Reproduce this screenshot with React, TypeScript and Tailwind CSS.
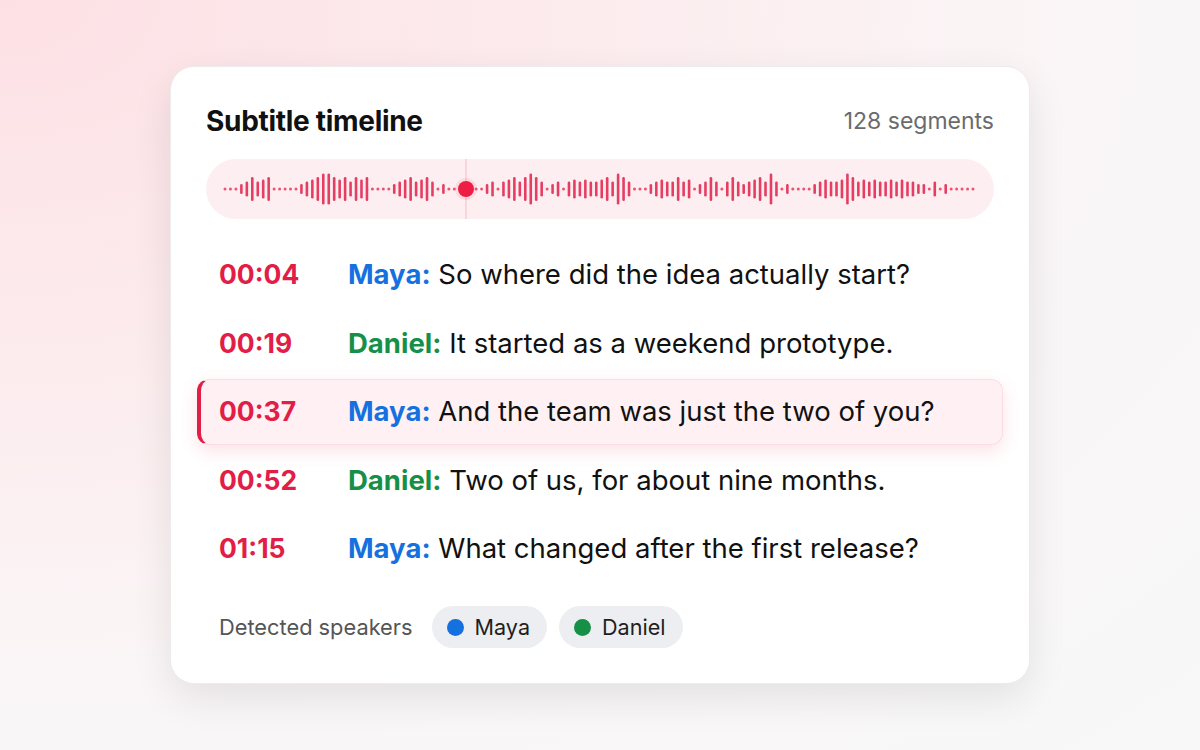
import React from "react";

const WAVE =
  "...smlmMl.....smMlxxl" +
  "MlmlMl....smMlmMlm.s.." +
  "  " +
  "...sm.mMlmlxlm.sm.mMmMm" +
  "mMlmxlm...smMmmlmM.smlm.m" +
  "lmsmMlmxm.s....smMmmMxl" +
  "mMmMmmMmMmmss.m.s.....";

const HEIGHTS: Record<string, number> = {
  ".": 3,
  s: 10,
  m: 15,
  M: 19,
  l: 24,
  x: 31,
};

const rows = [
  { time: "00:04", speaker: "Maya", text: "So where did the idea actually start?" },
  { time: "00:19", speaker: "Daniel", text: "It started as a weekend prototype." },
  { time: "00:37", speaker: "Maya", text: "And the team was just the two of you?", active: true },
  { time: "00:52", speaker: "Daniel", text: "Two of us, for about nine months." },
  { time: "01:15", speaker: "Maya", text: "What changed after the first release?" },
];

const Waveform = () => {
  const chars = WAVE.split("");
  const step = (767 - 19) / (chars.length - 1);

  return (
    <div className="relative h-[60px] rounded-full bg-[#fdeff1]">
      <svg width="790" height="60" viewBox="0 0 790 60" className="absolute inset-0">
        <rect x="259" y="0" width="2" height="60" fill="#f8d6dc" />
        {chars.map((c, i) => {
          if (c === " ") return null;
          const h = HEIGHTS[c];
          const x = 19 + i * step;
          if (c === ".") {
            return <circle key={i} cx={x} cy={30} r={1.5} fill="#e8375c" opacity={0.85} />;
          }
          return (
            <rect
              key={i}
              x={x - 1.3}
              y={30 - h / 2}
              width={2.6}
              height={h}
              rx={1.3}
              fill="#e3264f"
              opacity={0.88}
            />
          );
        })}
        <circle cx="260" cy="30" r="11" fill="#f43f5e" opacity="0.12" />
        <circle cx="260" cy="30" r="8" fill="#ee1d45" />
      </svg>
    </div>
  );
};

const App = () => {
  return (
    <div
      className="flex h-screen w-full items-center justify-center bg-[radial-gradient(ellipse_at_top_left,#fde0e4_0%,#fcecee_35%,#faf6f7_65%,#f8f8f9_100%)]"
      style={{ fontFamily: "Inter, 'Noto Sans', sans-serif" }}
    >
      <div className="w-[860px] rounded-[24px] border border-[#ececec] bg-white px-[35px] pt-[38px] pb-[35px] shadow-[0_14px_40px_rgba(0,0,0,0.09)]">
        <div className="flex h-[32px] items-center justify-between">
          <h1 className="text-[28px] font-bold tracking-[-0.3px] text-[#111111]">
            Subtitle timeline
          </h1>
          <span className="text-[23px] text-[#6b6b6b]">128 segments</span>
        </div>

        <div className="mt-[22px]">
          <Waveform />
        </div>

        <div className="-mx-[9px] mt-[23px] flex flex-col gap-[2.5px]">
          {rows.map((row) => (
            <div
              key={row.time}
              className={
                row.active
                  ? "flex h-[66px] items-center rounded-[12px] border border-l-4 border-[#fbdde2] border-l-[#e11d48] bg-[#fff1f3] pl-[18px] shadow-[0_6px_18px_rgba(225,29,72,0.13)]"
                  : "flex h-[66px] items-center border border-l-4 border-transparent pl-[18px]"
              }
            >
              <span className="w-[129px] text-[26.5px] font-bold text-[#e11d48]">{row.time}</span>
              <span className="text-[27.5px] text-[#111111]">
                <span
                  className={
                    row.speaker === "Maya"
                      ? "font-bold text-[#1570e0]"
                      : "font-bold text-[#168f47]"
                  }
                >
                  {row.speaker}:
                </span>{" "}
                {row.text}
              </span>
            </div>
          ))}
        </div>

        <div className="mt-[24px] flex items-center pl-[13px]">
          <span className="mr-[19px] text-[21.8px] text-[#555555]">Detected speakers</span>
          <div className="flex gap-[12px]">
            <div className="flex h-[42px] items-center gap-[11px] rounded-full bg-[#eceef1] pl-[15px] pr-[17px]">
              <span className="h-[17px] w-[17px] rounded-full bg-[#1570e0]" />
              <span className="text-[21.6px] text-[#1f1f1f]">Maya</span>
            </div>
            <div className="flex h-[42px] items-center gap-[11px] rounded-full bg-[#eceef1] pl-[15px] pr-[17px]">
              <span className="h-[17px] w-[17px] rounded-full bg-[#168f47]" />
              <span className="text-[21.6px] text-[#1f1f1f]">Daniel</span>
            </div>
          </div>
        </div>
      </div>
    </div>
  );
};

export default App;
